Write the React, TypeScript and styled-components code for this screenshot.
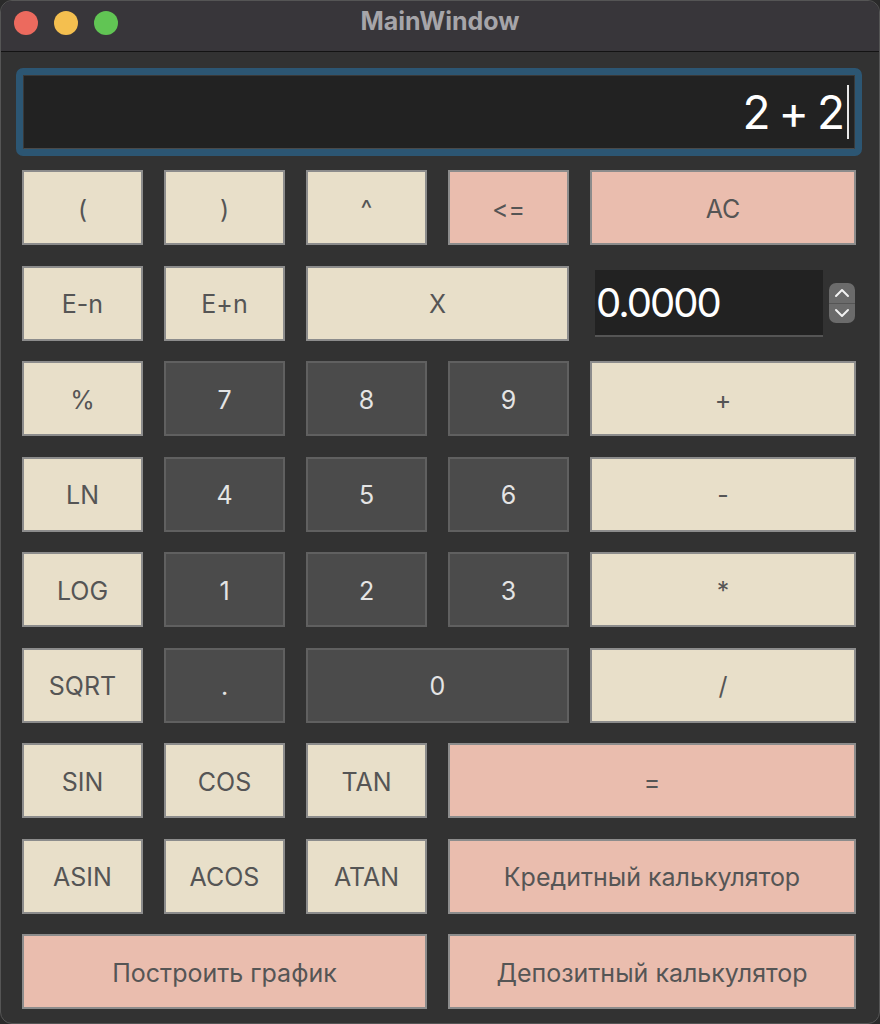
import React from 'react';
import styled, { createGlobalStyle, css } from 'styled-components';

const GlobalStyle = createGlobalStyle`
  html, body {
    margin: 0;
    padding: 0;
    background: #2a2a2a;
  }
  * {
    box-sizing: border-box;
  }
`;

type Tone = 'light' | 'accent' | 'digit';

const tones = {
  light: css`
    background: #e8dfc9;
    border-color: #8c8c8c;
    color: #555555;
  `,
  accent: css`
    background: #eabdae;
    border-color: #8c8c8c;
    color: #555555;
  `,
  digit: css`
    background: #4b4b4b;
    border-color: #606060;
    color: #e4e4e4;
  `,
};

const Window = styled.div`
  width: 880px;
  height: 1024px;
  background: #323232;
  border: 1px solid #555555;
  border-radius: 12px;
  overflow: hidden;
  display: flex;
  flex-direction: column;
  font-family: Inter, 'Liberation Sans', Arial, sans-serif;
`;

const TitleBar = styled.div`
  height: 51px;
  flex-shrink: 0;
  background: #38363a;
  border-bottom: 1px solid #131313;
  display: flex;
  align-items: center;
  position: relative;
  padding-left: 13px;
  gap: 16px;
`;

const Light = styled.span<{ $color: string }>`
  width: 24px;
  height: 24px;
  border-radius: 50%;
  background: ${(p) => p.$color};
  margin-top: -7px;
`;

const Title = styled.div`
  position: absolute;
  left: 0;
  right: 0;
  top: 5px;
  text-align: center;
  font-size: 25px;
  font-weight: 700;
  color: #a6a5a9;
  pointer-events: none;
`;

const Content = styled.div`
  padding: 16px 17px 0 15px;
`;

const DisplayRing = styled.div`
  height: 88px;
  border: 7px solid #2c5673;
  border-radius: 7px;
`;

const DisplayField = styled.div`
  height: 100%;
  background: #222222;
  border: 1px solid #393939;
  border-bottom-color: #4a4a4a;
  display: flex;
  align-items: center;
  justify-content: flex-end;
  padding-right: 5px;
  font-size: 46px;
  letter-spacing: -1px;
  word-spacing: -3px;
  color: #ffffff;
`;

const Caret = styled.span`
  width: 2px;
  height: 54px;
  background: #e8e8e8;
  margin-left: 3px;
`;

const Grid = styled.div`
  margin: 14px 6px 0;
  display: grid;
  grid-template-columns: repeat(5, 121px) 1fr;
  grid-template-rows: repeat(9, 75px);
  column-gap: 21px;
  row-gap: 20.5px;
`;

const Key = styled.button<{ $tone: Tone; $span?: number }>`
  grid-column: span ${(p) => p.$span ?? 1};
  border: 2px solid;
  ${(p) => tones[p.$tone]}
  font-family: inherit;
  font-size: 25px;
  padding: 2px 0 0;
  display: flex;
  align-items: center;
  justify-content: center;
`;

const SpinCell = styled.div`
  grid-column: span 2;
  display: flex;
  align-items: center;
  gap: 6px;
  padding-left: 5px;
`;

const SpinField = styled.div`
  flex: 1;
  height: 67px;
  background: #222222;
  border-bottom: 2px solid #555555;
  color: #ffffff;
  font-size: 40px;
  letter-spacing: -2px;
  display: flex;
  align-items: center;
  padding-left: 1px;
`;

const Stepper = styled.div`
  width: 26px;
  height: 40px;
  border-radius: 7px;
  background: #6b6b6b;
  display: flex;
  flex-direction: column;
  margin-right: 1px;
`;

const StepHalf = styled.div<{ $top?: boolean }>`
  flex: 1;
  display: flex;
  align-items: center;
  justify-content: center;
  ${(p) => p.$top && 'border-bottom: 1px solid #555555;'}
`;

const Chevron = ({ up }: { up?: boolean }) => (
  <svg width="16" height="10" viewBox="0 0 16 10">
    <polyline
      points={up ? '2,8 8,2 14,8' : '2,2 8,8 14,2'}
      fill="none"
      stroke="#f2f2f2"
      strokeWidth="2"
      strokeLinecap="round"
      strokeLinejoin="round"
    />
  </svg>
);

type KeyDef = [string, Tone, number?];

const keysBefore: KeyDef[] = [
  ['(', 'light'], [')', 'light'], ['^', 'light'], ['<=', 'accent'], ['AC', 'accent', 2],
  ['E-n', 'light'], ['E+n', 'light'], ['X', 'light', 2],
];

const keysAfter: KeyDef[] = [
  ['%', 'light'], ['7', 'digit'], ['8', 'digit'], ['9', 'digit'], ['+', 'light', 2],
  ['LN', 'light'], ['4', 'digit'], ['5', 'digit'], ['6', 'digit'], ['-', 'light', 2],
  ['LOG', 'light'], ['1', 'digit'], ['2', 'digit'], ['3', 'digit'], ['*', 'light', 2],
  ['SQRT', 'light'], ['.', 'digit'], ['0', 'digit', 2], ['/', 'light', 2],
  ['SIN', 'light'], ['COS', 'light'], ['TAN', 'light'], ['=', 'accent', 3],
  ['ASIN', 'light'], ['ACOS', 'light'], ['ATAN', 'light'], ['Кредитный калькулятор', 'accent', 3],
  ['Построить график', 'accent', 3], ['Депозитный калькулятор', 'accent', 3],
];

const renderKey = ([label, tone, span]: KeyDef) => (
  <Key key={label} $tone={tone} $span={span}>
    {label}
  </Key>
);

export default function App() {
  return (
    <>
      <GlobalStyle />
      <Window>
        <TitleBar>
          <Light $color="#ec6a5e" />
          <Light $color="#f4bf4f" />
          <Light $color="#61c554" />
          <Title>MainWindow</Title>
        </TitleBar>
        <Content>
          <DisplayRing>
            <DisplayField>
              2 + 2
              <Caret />
            </DisplayField>
          </DisplayRing>
          <Grid>
            {keysBefore.map(renderKey)}
            <SpinCell>
              <SpinField>0.0000</SpinField>
              <Stepper>
                <StepHalf $top>
                  <Chevron up />
                </StepHalf>
                <StepHalf>
                  <Chevron />
                </StepHalf>
              </Stepper>
            </SpinCell>
            {keysAfter.map(renderKey)}
          </Grid>
        </Content>
      </Window>
    </>
  );
}
